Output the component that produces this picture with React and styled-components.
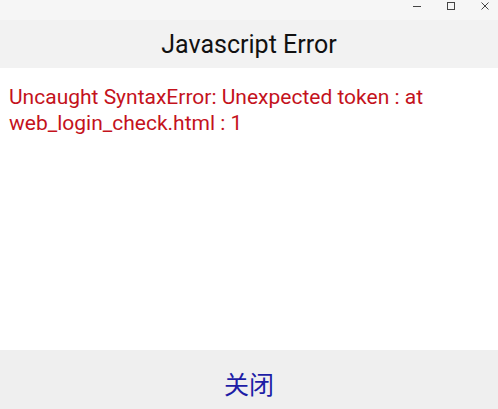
import React from 'react'
import styled, { createGlobalStyle } from 'styled-components'

const GlobalStyle = createGlobalStyle`
  html, body {
    margin: 0;
    padding: 0;
    height: 100%;
    background: #ffffff;
  }
  #root {
    height: 100%;
  }
`

const Window = styled.div`
  display: flex;
  flex-direction: column;
  width: 498px;
  height: 409px;
  font-family: Roboto, "Noto Sans CJK SC", sans-serif;
  background: #ffffff;
  overflow: hidden;
`

const TitleBar = styled.div`
  display: flex;
  justify-content: flex-end;
  align-items: flex-start;
  gap: 24px;
  height: 20px;
  padding: 1px 8px 0 0;
  box-sizing: border-box;
  background: #f6f6f6;
`

const WinButton = styled.button`
  display: flex;
  align-items: center;
  justify-content: center;
  width: 10px;
  height: 10px;
  padding: 0;
  border: none;
  background: transparent;
  color: #444;
`

const Header = styled.div`
  display: flex;
  align-items: center;
  justify-content: center;
  height: 48px;
  background: #f2f2f2;
  color: #111;
  font-size: 25px;
`

const Body = styled.div`
  flex: 1;
  padding: 16px 9px;
  color: #c4121c;
  font-size: 21px;
  line-height: 26px;
`

const Footer = styled.div`
  display: flex;
  align-items: center;
  justify-content: center;
  height: 59px;
  background: #efefef;
`

const CloseButton = styled.button`
  border: none;
  background: transparent;
  padding: 0;
  color: #1d1da6;
  font-family: "Noto Sans CJK SC", sans-serif;
  font-size: 25px;
  margin-top: 6px;
`

const App = () => (
  <Window>
    <GlobalStyle />
    <TitleBar>
      <WinButton>
        <svg width="10" height="10" viewBox="0 0 10 10">
          <path d="M1 5.5h8" stroke="currentColor" strokeWidth="1" />
        </svg>
      </WinButton>
      <WinButton>
        <svg width="10" height="10" viewBox="0 0 10 10">
          <rect x="1.5" y="1.5" width="7" height="7" fill="none" stroke="currentColor" strokeWidth="1" />
        </svg>
      </WinButton>
      <WinButton>
        <svg width="10" height="10" viewBox="0 0 10 10">
          <path d="M1.5 1.5l7 7M8.5 1.5l-7 7" stroke="currentColor" strokeWidth="1" />
        </svg>
      </WinButton>
    </TitleBar>
    <Header>Javascript Error</Header>
    <Body>
      Uncaught SyntaxError: Unexpected token : at web_login_check.html : 1
    </Body>
    <Footer>
      <CloseButton>关闭</CloseButton>
    </Footer>
  </Window>
)

export default App
